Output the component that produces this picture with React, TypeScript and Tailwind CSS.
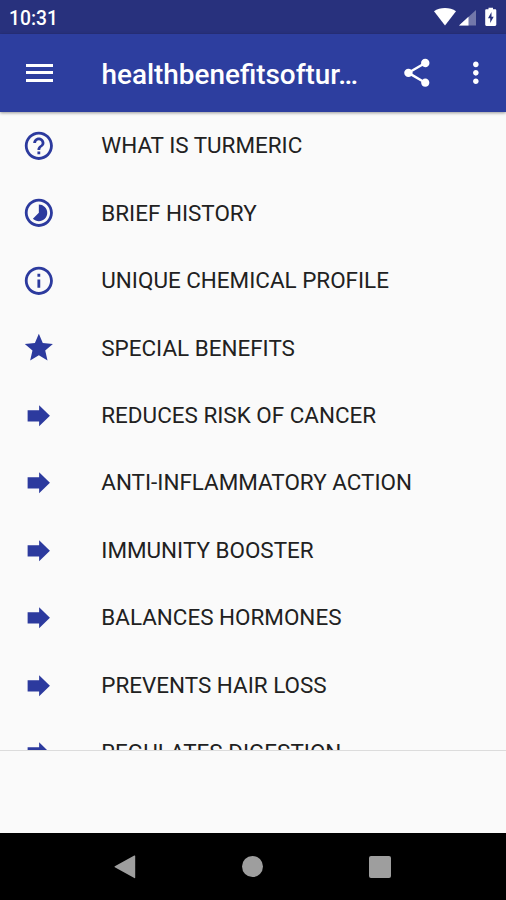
import type { ReactNode } from "react";

const ICON_PATHS: Record<string, string> = {
  help: "M11 18h2v-2h-2v2zm1-16C6.48 2 2 6.48 2 12s4.48 10 10 10 10-4.48 10-10S17.52 2 12 2zm0 18c-4.41 0-8-3.59-8-8s3.59-8 8-8 8 3.59 8 8-3.59 8-8 8zm0-14c-2.21 0-4 1.79-4 4h2c0-1.1.9-2 2-2s2 .9 2 2c0 2-3 1.75-3 5h2c0-2.25 3-2.5 3-5 0-2.21-1.79-4-4-4z",
  timelapse:
    "M16.24 7.76C15.07 6.59 13.54 6 12 6v6l-4.24 4.24c2.34 2.34 6.14 2.34 8.49 0 2.34-2.34 2.34-6.14-.01-8.48zM12 2C6.48 2 2 6.48 2 12s4.48 10 10 10 10-4.48 10-10S17.52 2 12 2zm0 18c-4.42 0-8-3.58-8-8s3.58-8 8-8 8 3.58 8 8-3.58 8-8 8z",
  info: "M11 17h2v-6h-2v6zm1-15C6.48 2 2 6.48 2 12s4.48 10 10 10 10-4.48 10-10S17.52 2 12 2zm0 18c-4.41 0-8-3.59-8-8s3.59-8 8-8 8 3.59 8 8-3.59 8-8 8zM11 9h2V7h-2v2z",
  star: "M12 17.27L18.18 21l-1.64-7.03L22 9.24l-7.19-.61L12 2 9.19 8.63 2 9.24l5.46 4.73L5.82 21z",
  arrow: "M12.2 8V4.500l7.700 7.500-7.700 7.500V16H4V8z",
  share:
    "M18 16.08c-.76 0-1.44.3-1.96.77L8.91 12.7c.05-.23.09-.46.09-.7s-.04-.47-.09-.7l7.05-4.11c.54.5 1.25.81 2.04.81 1.66 0 3-1.34 3-3s-1.34-3-3-3-3 1.34-3 3c0 .24.04.47.09.7L8.04 9.81C7.5 9.31 6.79 9 6 9c-1.66 0-3 1.34-3 3s1.34 3 3 3c.79 0 1.5-.31 2.04-.81l7.12 4.16c-.05.21-.08.43-.08.65 0 1.61 1.31 2.92 2.92 2.92 1.61 0 2.92-1.31 2.92-2.92s-1.31-2.92-2.92-2.92z",
  more: "M12 8c1.1 0 2-.9 2-2s-.9-2-2-2-2 .9-2 2 .9 2 2 2zm0 2c-1.1 0-2 .9-2 2s.9 2 2 2 2-.9 2-2-.9-2-2-2zm0 6c-1.1 0-2 .9-2 2s.9 2 2 2 2-.9 2-2-.9-2-2-2z",
};

const ITEMS = [
  { icon: "help", label: "WHAT IS TURMERIC" },
  { icon: "timelapse", label: "BRIEF HISTORY" },
  { icon: "info", label: "UNIQUE CHEMICAL PROFILE" },
  { icon: "star", label: "SPECIAL BENEFITS" },
  { icon: "arrow", label: "REDUCES RISK OF CANCER" },
  { icon: "arrow", label: "ANTI-INFLAMMATORY ACTION" },
  { icon: "arrow", label: "IMMUNITY BOOSTER" },
  { icon: "arrow", label: "BALANCES HORMONES" },
  { icon: "arrow", label: "PREVENTS HAIR LOSS" },
  { icon: "arrow", label: "REGULATES DIGESTION" },
];

function Icon({ name }: { name: string }) {
  return (
    <svg viewBox="0 0 24 24" fill="currentColor" className="size-[33.7px] shrink-0">
      <path d={ICON_PATHS[name]} />
    </svg>
  );
}

function StatusBar() {
  return (
    <div className="flex h-[33.7px] shrink-0 items-center justify-between bg-[#28317d] pl-[9px] pr-[7px] text-white">
      <span className="pt-[3px] text-[19.3px] font-medium leading-none">10:31</span>
      <svg viewBox="0 0 66 20" className="h-[20px] w-[66px]" fill="currentColor">
        <path d="M1 4.2C7 -.2 17 -.2 23 4.2L12 18.4z" />
        <path d="M43 3v15.500H26z" opacity=".35" />
        <path d="M35.500 9.800v8.700H26z" />
        <path
          fillRule="evenodd"
          d="M55.500 2.300V.8h4.500v1.500h2c.8 0 1.300.5 1.300 1.300v14c0 .8-.5 1.300-1.300 1.300h-8.500c-.8 0-1.300-.5-1.300-1.300v-14c0-.8.500-1.300 1.300-1.300zM58.500 5l-3.500 6.300h2.200V16l3.500-6.300h-2.200z"
        />
      </svg>
    </div>
  );
}

function IconButton({ label, className, children }: { label: string; className?: string; children: ReactNode }) {
  return (
    <button aria-label={label} className={className}>
      {children}
    </button>
  );
}

function Toolbar() {
  return (
    <header className="z-10 flex h-[78.3px] shrink-0 items-center bg-[#2d3e9f] pl-[25.700px] pr-[13.500px] text-white shadow-[0_1px_3px_rgba(0,0,0,0.4)]">
      <IconButton label="Menu" className="flex w-[27.300px] flex-col gap-[4.600px]">
        <span className="h-[3px] w-full bg-white" />
        <span className="h-[3px] w-full bg-white" />
        <span className="h-[3px] w-full bg-white" />
      </IconButton>
      <h1 className="ml-[48.500px] flex-1 whitespace-nowrap pt-[4px] text-[27.900px] font-medium leading-none">
        healthbenefitsoftur…
      </h1>
      <IconButton label="Share" className="mr-[25.500px]">
        <Icon name="share" />
      </IconButton>
      <IconButton label="More options">
        <Icon name="more" />
      </IconButton>
    </header>
  );
}

function NavigationBar() {
  return (
    <nav className="flex h-[67px] shrink-0 items-center justify-between bg-black pl-[114px] pr-[115.500px] text-[#9e9e9e]">
      <svg viewBox="0 0 22 24" className="h-[24px] w-[22px]" fill="currentColor">
        <path d="M.8 11.300 20.300.500q.900-.400.900.500v21.500q0 1-.900.500L.8 12.200q-.700-.450 0-.9z" />
      </svg>
      <span className="size-[20.500px] rounded-full bg-[#9e9e9e]" />
      <span className="size-[22px] rounded-[2px] bg-[#9e9e9e]" />
    </nav>
  );
}

export default function App() {
  return (
    <div className="flex h-[900px] w-[506px] flex-col overflow-hidden bg-[#fafafa] font-[Roboto,sans-serif]">
      <StatusBar />
      <Toolbar />
      <main className="min-h-0 flex-1 overflow-hidden">
        <ul>
          {ITEMS.map((item) => (
            <li key={item.label} className="flex h-[67.470px] items-center pl-[22.300px] text-[#2c3a9e]">
              <Icon name={item.icon} />
              <span className="ml-[45.300px] whitespace-nowrap pb-[0.800px] text-[22.450px] leading-none text-[#212121]">
                {item.label}
              </span>
            </li>
          ))}
        </ul>
      </main>
      <footer className="h-[83px] shrink-0 border-t border-[#dcdcdc] bg-[#fafafa]" />
      <NavigationBar />
    </div>
  );
}
